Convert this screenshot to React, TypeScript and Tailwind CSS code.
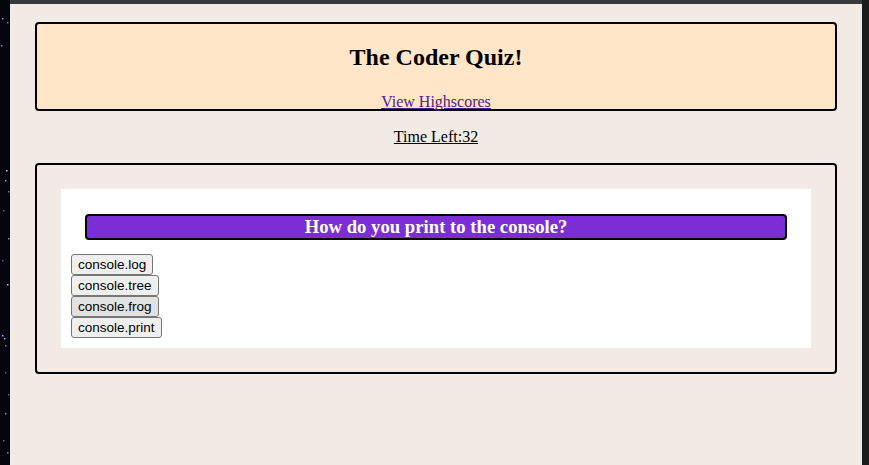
import React from "react";

const serif = { fontFamily: '"Liberation Serif", "Times New Roman", serif' };

function Stars() {
  const dots: [number, number, number][] = [
    [2, 18, 0.8], [7, 22, 0.6], [1, 45, 0.7], [6, 170, 1], [5, 180, 0.8], [8, 191, 0.6],
    [3, 210, 0.5], [8, 238, 0.7], [2, 260, 0.5], [7, 284, 0.9], [2, 335, 0.9], [4, 338, 0.9],
    [5, 345, 0.6], [5, 372, 0.5], [8, 394, 0.5], [5, 413, 0.7], [3, 440, 0.5], [7, 452, 0.7],
  ];
  return (
    <svg width="10" height="465" viewBox="0 0 10 465" className="block">
      <rect width="10" height="465" fill="#05060d" />
      {dots.map(([x, y, o], i) => (
        <rect key={i} x={x} y={y} width="1.5" height="1.5" fill="#b8c4ff" opacity={o} />
      ))}
    </svg>
  );
}

export default function App() {
  const answers = ["console.log", "console.tree", "console.frog", "console.print"];
  return (
    <div className="flex h-[465px] w-[869px] overflow-hidden bg-[#1c1c1c]">
      <div className="w-[10px] shrink-0">
        <Stars />
      </div>
      <div className="flex w-[852px] shrink-0 flex-col bg-[#f2ebe5]">
        <div className="h-[4px] bg-[#39393c]" />
        <div className="flex flex-col px-[25px] pt-[18px]" style={serif}>
          <header className="rounded-[4px] border-2 border-black bg-[#ffe6c9] text-center leading-[18px]">
            <h1 className="mt-[19px] mb-[20px] text-[24px] leading-[28px] font-bold text-black">
              The Coder Quiz!
            </h1>
            <div className="h-[18px] text-[16px] leading-[22px]">
              <a href="#" className="text-[#551a8b] underline">
                View Highscores
              </a>
            </div>
          </header>
          <p className="mt-[17px] mb-[17px] text-center text-[16px] leading-[18px] text-black underline">
            Time Left:32
          </p>
          <section className="rounded-[4px] border-2 border-black p-[24px]">
            <div className="bg-white px-[10px] pt-[25px] pb-[10px]">
              <h2 className="mx-[14px] rounded-[4px] border-2 border-black bg-[#7c2ed6] text-center text-[18.7px] leading-[22px] font-bold text-white">
                How do you print to the console?
              </h2>
              <div className="mt-[14px] flex flex-col items-start">
                {answers.map((a, i) => (
                  <button
                    key={a}
                    className={`rounded-[3px] border border-[#767676] px-[6px] text-[13.5px] leading-[19px] text-black ${
                      i === 2 ? "bg-[#e2e2e2]" : "bg-[#efefef]"
                    }`}
                    style={{ fontFamily: '"Liberation Sans", Arial, sans-serif' }}
                  >
                    {a}
                  </button>
                ))}
              </div>
            </div>
          </section>
        </div>
      </div>
      <div className="w-[7px] shrink-0 bg-[#1c1c1c]" />
    </div>
  );
}
